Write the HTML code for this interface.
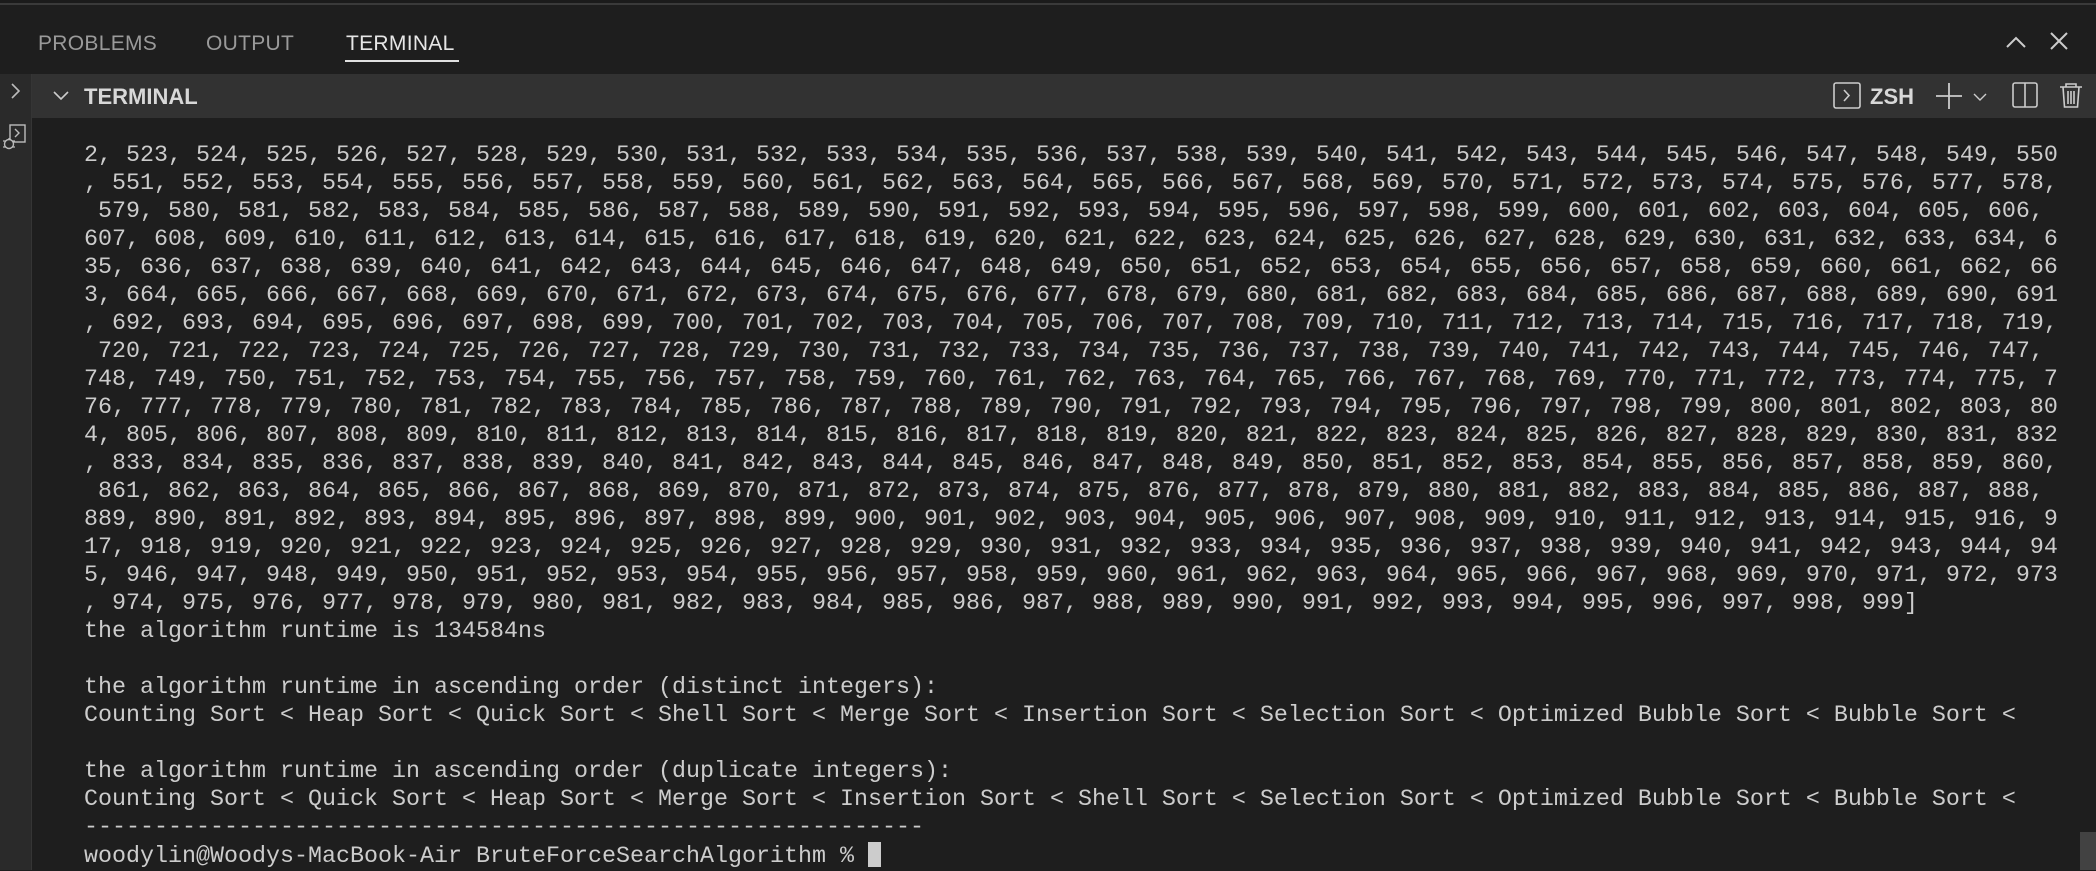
<!DOCTYPE html>
<html><head><meta charset="utf-8"><style>
*{margin:0;padding:0;box-sizing:border-box}
body{width:2096px;height:870px;background:#1e1e1e;position:relative;overflow:hidden;font-family:"Liberation Sans",sans-serif}
.topline{position:absolute;left:0;top:0;width:2096px;height:5px;background:#1b1b1b;border-bottom:2px solid #3a3a3a}
.tab{position:absolute;top:32px;font-size:21px;color:#9a9a9a;letter-spacing:0.3px}
.hdr{position:absolute;left:32px;top:74px;width:2064px;height:44px;background:#323232}
.side{position:absolute;left:0;top:74px;width:32px;height:796px;background:#2a2a2a;border-right:1px solid #353535}
pre{position:absolute;left:84px;top:142px;font-family:"Liberation Mono",monospace;font-size:23.33px;line-height:28px;color:#cccccc}
.cur{display:inline-block;width:13px;height:25px;background:#cccccc;vertical-align:-5px}
svg{position:absolute}
</style></head><body>
<div class="topline"></div>
<div class="tab" style="left:38px">PROBLEMS</div>
<div class="tab" style="left:206px">OUTPUT</div>
<div class="tab" style="left:346px;color:#e6e6e6">TERMINAL</div>
<div style="position:absolute;left:345px;top:60px;width:114px;height:2px;background:#e0e0e0"></div>
<svg style="left:2000px;top:30px" width="80" height="24" viewBox="0 0 80 24"><path d="M7 17 L16 8 L25 17" stroke="#ccc" stroke-width="2" fill="none"/><path d="M51 3 L67 19 M67 3 L51 19" stroke="#ccc" stroke-width="2" fill="none"/></svg>
<div class="side"></div>
<svg style="left:0;top:78px" width="32" height="80" viewBox="0 0 32 80"><path d="M12 6 L19 13 L12 20" stroke="#bbb" stroke-width="1.6" fill="none"/><rect x="10" y="47" width="15" height="17" stroke="#bbb" stroke-width="1.4" fill="none"/><path d="M15 51 L19 55 L15 59" stroke="#bbb" stroke-width="1.4" fill="none"/><circle cx="9" cy="66" r="4.5" stroke="#bbb" stroke-width="1.4" fill="#2a2a2a"/><path d="M3 63h3M3 69h3M12 63h3M12 69h3M9 60v2" stroke="#bbb" stroke-width="1.3"/></svg>
<div class="hdr"></div>
<svg style="left:52px;top:88px" width="20" height="16" viewBox="0 0 20 16"><path d="M2 4 L9 11 L16 4" stroke="#ccc" stroke-width="1.6" fill="none"/></svg>
<div style="position:absolute;left:84px;top:84px;font-size:22px;font-weight:bold;color:#d8d8d8">TERMINAL</div>
<svg style="left:1830px;top:80px" width="260" height="32" viewBox="0 0 260 32"><rect x="4" y="3" width="26" height="25" rx="2" stroke="#ccc" stroke-width="1.6" fill="none"/><path d="M14 10 L19 15.5 L14 21" stroke="#ccc" stroke-width="1.6" fill="none"/><path d="M106 16h26M119 3v26" stroke="#ccc" stroke-width="1.8"/><path d="M144 14 L150 20 L156 14" stroke="#ccc" stroke-width="1.4" fill="none"/><rect x="183" y="3" width="24" height="24" rx="2" stroke="#ccc" stroke-width="1.6" fill="none"/><path d="M195 3v24" stroke="#ccc" stroke-width="1.6"/><path d="M230 7h22M236 7v-3h10v3M233 7l1.5 20h13l1.5-20M238 11v13M241 11v13M244 11v13" stroke="#ccc" stroke-width="1.6" fill="none"/></svg>
<div style="position:absolute;left:1870px;top:84px;font-size:22px;font-weight:bold;color:#d8d8d8">ZSH</div>
<pre>2, 523, 524, 525, 526, 527, 528, 529, 530, 531, 532, 533, 534, 535, 536, 537, 538, 539, 540, 541, 542, 543, 544, 545, 546, 547, 548, 549, 550
, 551, 552, 553, 554, 555, 556, 557, 558, 559, 560, 561, 562, 563, 564, 565, 566, 567, 568, 569, 570, 571, 572, 573, 574, 575, 576, 577, 578,
 579, 580, 581, 582, 583, 584, 585, 586, 587, 588, 589, 590, 591, 592, 593, 594, 595, 596, 597, 598, 599, 600, 601, 602, 603, 604, 605, 606,
607, 608, 609, 610, 611, 612, 613, 614, 615, 616, 617, 618, 619, 620, 621, 622, 623, 624, 625, 626, 627, 628, 629, 630, 631, 632, 633, 634, 6
35, 636, 637, 638, 639, 640, 641, 642, 643, 644, 645, 646, 647, 648, 649, 650, 651, 652, 653, 654, 655, 656, 657, 658, 659, 660, 661, 662, 66
3, 664, 665, 666, 667, 668, 669, 670, 671, 672, 673, 674, 675, 676, 677, 678, 679, 680, 681, 682, 683, 684, 685, 686, 687, 688, 689, 690, 691
, 692, 693, 694, 695, 696, 697, 698, 699, 700, 701, 702, 703, 704, 705, 706, 707, 708, 709, 710, 711, 712, 713, 714, 715, 716, 717, 718, 719,
 720, 721, 722, 723, 724, 725, 726, 727, 728, 729, 730, 731, 732, 733, 734, 735, 736, 737, 738, 739, 740, 741, 742, 743, 744, 745, 746, 747,
748, 749, 750, 751, 752, 753, 754, 755, 756, 757, 758, 759, 760, 761, 762, 763, 764, 765, 766, 767, 768, 769, 770, 771, 772, 773, 774, 775, 7
76, 777, 778, 779, 780, 781, 782, 783, 784, 785, 786, 787, 788, 789, 790, 791, 792, 793, 794, 795, 796, 797, 798, 799, 800, 801, 802, 803, 80
4, 805, 806, 807, 808, 809, 810, 811, 812, 813, 814, 815, 816, 817, 818, 819, 820, 821, 822, 823, 824, 825, 826, 827, 828, 829, 830, 831, 832
, 833, 834, 835, 836, 837, 838, 839, 840, 841, 842, 843, 844, 845, 846, 847, 848, 849, 850, 851, 852, 853, 854, 855, 856, 857, 858, 859, 860,
 861, 862, 863, 864, 865, 866, 867, 868, 869, 870, 871, 872, 873, 874, 875, 876, 877, 878, 879, 880, 881, 882, 883, 884, 885, 886, 887, 888,
889, 890, 891, 892, 893, 894, 895, 896, 897, 898, 899, 900, 901, 902, 903, 904, 905, 906, 907, 908, 909, 910, 911, 912, 913, 914, 915, 916, 9
17, 918, 919, 920, 921, 922, 923, 924, 925, 926, 927, 928, 929, 930, 931, 932, 933, 934, 935, 936, 937, 938, 939, 940, 941, 942, 943, 944, 94
5, 946, 947, 948, 949, 950, 951, 952, 953, 954, 955, 956, 957, 958, 959, 960, 961, 962, 963, 964, 965, 966, 967, 968, 969, 970, 971, 972, 973
, 974, 975, 976, 977, 978, 979, 980, 981, 982, 983, 984, 985, 986, 987, 988, 989, 990, 991, 992, 993, 994, 995, 996, 997, 998, 999]
the algorithm runtime is 134584ns

the algorithm runtime in ascending order (distinct integers):
Counting Sort &lt; Heap Sort &lt; Quick Sort &lt; Shell Sort &lt; Merge Sort &lt; Insertion Sort &lt; Selection Sort &lt; Optimized Bubble Sort &lt; Bubble Sort &lt;

the algorithm runtime in ascending order (duplicate integers):
Counting Sort &lt; Quick Sort &lt; Heap Sort &lt; Merge Sort &lt; Insertion Sort &lt; Shell Sort &lt; Selection Sort &lt; Optimized Bubble Sort &lt; Bubble Sort &lt;
------------------------------------------------------------
woodylin@Woodys-MacBook-Air BruteForceSearchAlgorithm % <span class="cur"></span></pre>
<div style="position:absolute;left:2080px;top:832px;width:16px;height:38px;background:#424242"></div>
</body></html>
